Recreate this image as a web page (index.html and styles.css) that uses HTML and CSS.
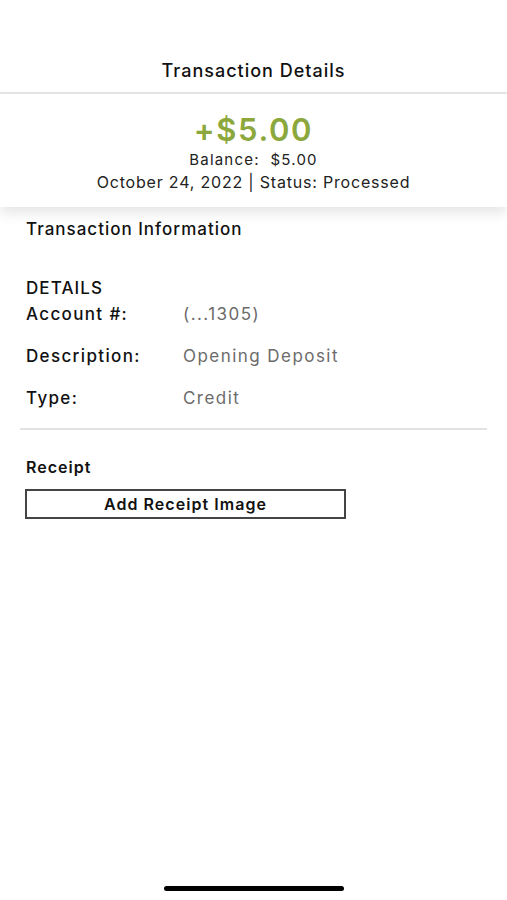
FILE: index.html
```html
<!DOCTYPE html>
<html>
<head>
<meta charset="utf-8">
<link rel="stylesheet" href="styles.css">
</head>
<body>
<div class="screen">
  <header class="nav">
    <h1 class="nav-title">Transaction Details</h1>
  </header>
  <section class="hero">
    <div class="amount">+$5.00</div>
    <div class="balance">Balance:&nbsp; $5.00</div>
    <div class="meta">October 24, 2022 | Status: Processed</div>
  </section>
  <main class="content">
    <h2 class="section-title">Transaction Information</h2>
    <div class="details">
      <div class="details-head">DETAILS</div>
      <div class="row row-first"><span class="label">Account #:</span><span class="value">(...1305)</span></div>
      <div class="row"><span class="label">Description:</span><span class="value">Opening Deposit</span></div>
      <div class="row"><span class="label">Type:</span><span class="value">Credit</span></div>
    </div>
    <hr class="divider">
    <div class="receipt">
      <div class="receipt-title">Receipt</div>
      <button class="receipt-btn">Add Receipt Image</button>
    </div>
  </main>
  <div class="home-bar"></div>
</div>
</body>
</html>
```
FILE: styles.css
```css
* { box-sizing: border-box; }
html, body { margin: 0; padding: 0; background: #fff; }
body {
  font-family: Inter, "Liberation Sans", Arial, sans-serif;
  color: #1a1a1a;
  width: 507px;
  height: 900px;
  overflow: hidden;
}
.screen {
  position: relative;
  height: 900px;
  display: flex;
  flex-direction: column;
}
.nav {
  height: 94px;
  padding-top: 60px;
  border-bottom: 2px solid #e6e6e6;
  text-align: center;
}
.nav-title {
  margin: 0;
  font-size: 18px;
  font-weight: 500;
  letter-spacing: 1px;
  line-height: 22px;
  color: #111;
}
.hero {
  position: relative;
  z-index: 1;
  background: #fff;
  text-align: center;
  padding: 18px 0 14px;
  box-shadow: 0 6px 12px rgba(0,0,0,0.10);
}
.amount {
  font-size: 31px;
  font-weight: 600;
  letter-spacing: 1.6px;
  color: #8ca83c;
  line-height: 36px;
}
.balance {
  font-size: 15px;
  line-height: 22px;
  margin-top: 1px;
  letter-spacing: 1.2px;
  color: #222;
}
.meta {
  font-size: 16px;
  line-height: 22px;
  letter-spacing: 0.8px;
  color: #222;
}
.content {
  padding: 12px 20px 0;
}
.section-title {
  margin: 0 0 0 6px;
  font-size: 17px;
  font-weight: 500;
  letter-spacing: 1px;
  line-height: 20px;
  color: #111;
}
.details {
  padding: 39px 0 0 6px;
}
.details-head {
  font-size: 17px;
  font-weight: 500;
  line-height: 20px;
  letter-spacing: 1.1px;
  color: #111;
}
.row {
  display: flex;
  font-size: 17px;
  line-height: 20px;
  margin-top: 22px;
}
.row-first { margin-top: 6px; }
.label { width: 157px; color: #111; font-weight: 500; letter-spacing: 1.35px; }
.value { color: #6b6b6b; letter-spacing: 1.45px; }
.divider {
  margin: 20px 0 0;
  border: 0;
  border-top: 2px solid #e2e2e2;
}
.receipt {
  padding: 27px 0 0 6px;
}
.receipt-title {
  font-size: 16px;
  font-weight: 600;
  line-height: 20px;
  letter-spacing: 1px;
  color: #111;
}
.receipt-btn {
  display: block;
  margin-top: 12px;
  margin-left: -1px;
  width: 321px;
  height: 30px;
  background: #fff;
  border: 2px solid #444;
  border-radius: 0;
  font-family: inherit;
  font-size: 16px;
  font-weight: 600;
  letter-spacing: 1.05px;
  color: #111;
  padding: 0;
}
.home-bar {
  position: absolute;
  left: 164px;
  bottom: 9px;
  width: 180px;
  height: 5px;
  border-radius: 3px;
  background: #000;
}
```
